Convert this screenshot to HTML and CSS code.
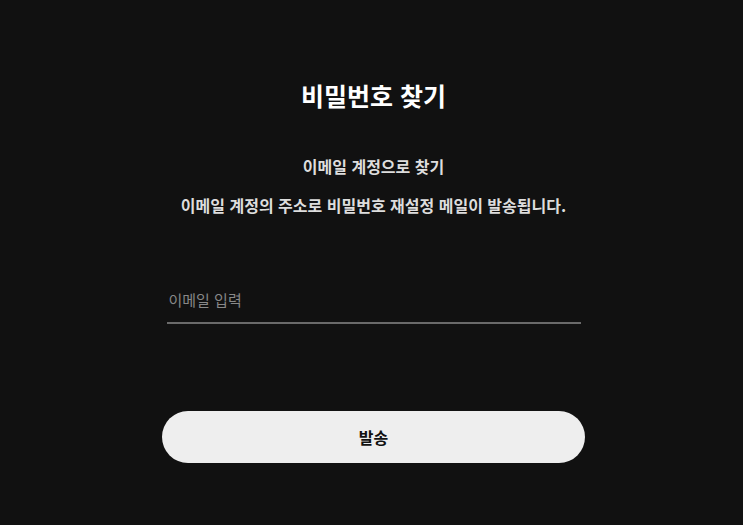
FILE: index.html
```html
<!DOCTYPE html>
<html lang="ko">
<head>
    <meta charset="UTF-8">
    <meta name="viewport" content="width=device-width, initial-scale=1.0">
    <title>비밀번호 찾기</title>
    <link rel="stylesheet" href="styles.css">
</head>
<body>
    <div class="find-container">
        <h1>비밀번호 찾기</h1>

        <div class="guide">
            <p>이메일 계정으로 찾기</p>
            <p>이메일 계정의 주소로 비밀번호 재설정 메일이 발송됩니다.</p>
        </div>

        <div class="input-group">
            <input type="email" id="email" placeholder="이메일 입력">
        </div>

        <button id="sendBtn">발송</button>
    </div>
</body>
</html>
```

FILE: styles.css
```css
body {
    font-family: "Noto Sans CJK KR", "Noto Sans", sans-serif;
    background-color: #111111;
    margin: 0;
    color: #ffffff;
}

.find-container {
    display: flex;
    flex-direction: column;
    align-items: center;
    padding-top: 78px;
    padding-left: 4px;
}

h1 {
    margin: 0;
    font-size: 25px;
    font-weight: 700;
    line-height: 34px;
    color: #ffffff;
}

.guide {
    margin-top: 43px;
    text-align: center;
}

.guide p {
    margin: 0 0 17px;
    font-size: 16px;
    font-weight: 700;
    line-height: 22px;
    color: #dddddd;
}

.input-group {
    margin-top: 54px;
    width: 414px;
}

input[type="email"] {
    width: 100%;
    box-sizing: border-box;
    background: transparent;
    border: none;
    border-bottom: 2px solid #6a6a6a;
    padding: 0 2px 11px;
    font-family: inherit;
    font-size: 15px;
    line-height: 22px;
    color: #ffffff;
    outline: none;
}

input[type="email"]::placeholder {
    color: #888888;
}

button {
    margin-top: 87px;
    width: 423px;
    height: 52px;
    border: none;
    border-radius: 26px;
    background-color: #eeeeee;
    color: #111111;
    font-family: inherit;
    font-size: 16px;
    font-weight: 700;
    cursor: pointer;
}
```
